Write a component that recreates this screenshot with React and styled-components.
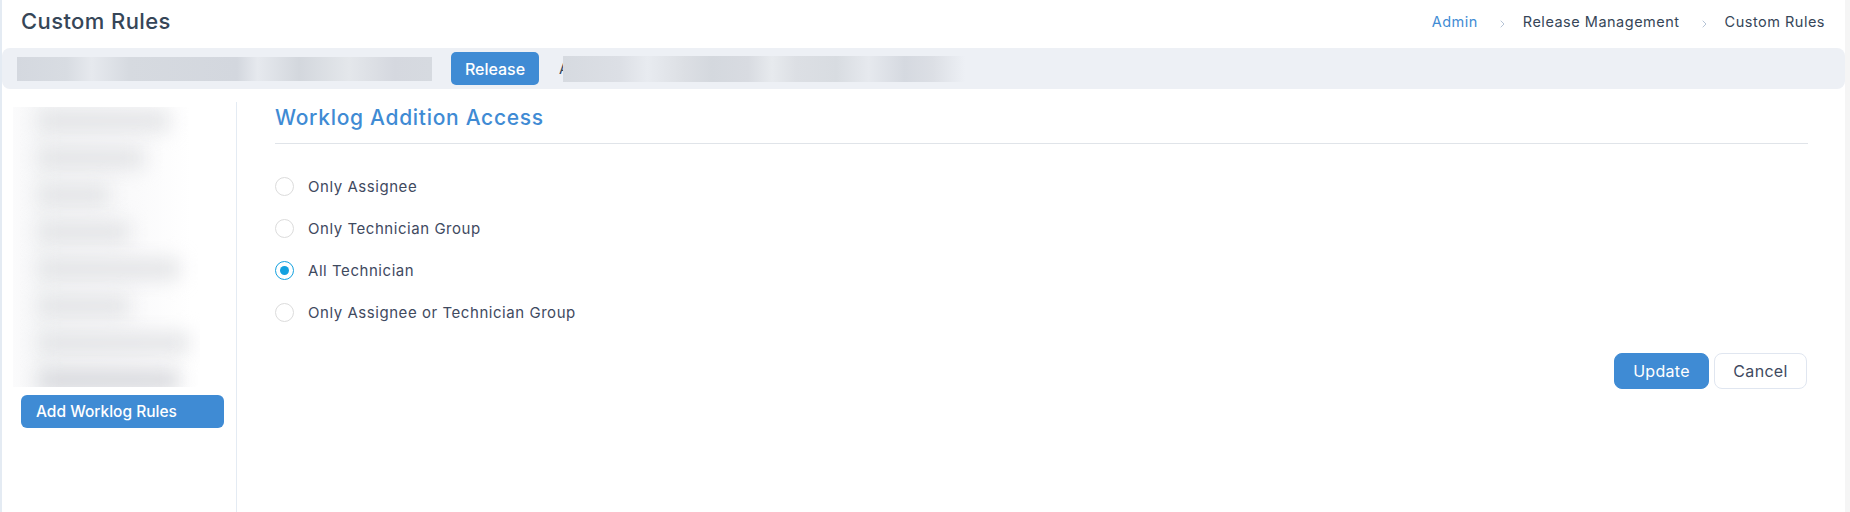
import React from 'react';
import styled, { createGlobalStyle } from 'styled-components';

const GlobalStyle = createGlobalStyle`
  html, body { margin: 0; padding: 0; background: #fff; }
  body { font-family: Inter, "Open Sans", sans-serif; color: #364658; }
`;

const Page = styled.div`
  box-sizing: border-box;
  width: 1850px;
  height: 512px;
  overflow: hidden;
  display: flex;
  flex-direction: column;
  border-left: 2px solid #e4ebf3;
  border-right: 5px solid #f5f5f5;
`;

const TopBar = styled.header`
  box-sizing: border-box;
  height: 48px;
  flex: none;
  display: flex;
  align-items: center;
  justify-content: space-between;
  padding: 0 20px 6px 19px;
`;

const Title = styled.h1`
  margin: 0;
  font-size: 22px;
  font-weight: 500;
  letter-spacing: 0.4px;
  color: #364658;
`;

const Crumbs = styled.nav`
  display: flex;
  align-items: center;
  font-size: 14.5px;
`;

const Crumb = styled.span`
  letter-spacing: 0.5px;
  color: ${({ $active }) => ($active ? '#3f8bd4' : '#364658')};
`;

const Chevron = styled.svg`
  width: 5px;
  height: 8px;
  margin: 5px 18px 0 22px;
  fill: none;
  stroke: #b6c4d6;
  stroke-width: 1;
`;

const FilterBar = styled.div`
  box-sizing: border-box;
  height: 41px;
  flex: none;
  display: flex;
  align-items: center;
  background: #edf0f5;
  border-radius: 8px;
  padding-left: 15px;
`;

const BlurStrip = styled.div`
  width: 415px;
  height: 24px;
  flex: none;
  background: linear-gradient(90deg, #d4d8df 0%, #d8dce2 12%, #e6e9ee 18%, #d6dae0 27%, #d3d7de 53%, #e6e9ee 58%, #d3d7dd 68%, #e4e7eb 80%, #d5d8df 91%, #d6dae0 100%);
`;

const TabButton = styled.button`
  width: 88px;
  height: 33px;
  flex: none;
  margin-left: 19px;
  border: 0;
  border-radius: 5px;
  background: #3f8bd4;
  color: #fff;
  font: 500 16px Inter, sans-serif;
  padding: 0;
`;

const TabLetter = styled.span`
  flex: none;
  width: 4px;
  margin-left: 20px;
  font-size: 14.5px;
  color: #364658;
`;

const BlurStripWide = styled.div`
  position: relative;
  width: 402px;
  height: 26px;
  flex: none;
  background: linear-gradient(90deg, #d6dae0 0%, #dcdfe5 14%, #e8ebf0 21%, #dcdfe4 30%, #d4d8de 37%, #d8dbe1 46%, #e7eaee 52%, #dcdfe4 58%, #d8dce1 68%, #e6e9ee 76%, #d5d9e0 85%, #dcdfe5 92%, #edf0f5 100%);
`;

const Body = styled.div`
  flex: 1;
  min-height: 0;
  display: flex;
  padding-top: 13px;
`;

const Sidebar = styled.aside`
  box-sizing: border-box;
  width: 235px;
  flex: none;
  border-right: 1px solid #e4ebf3;
  padding: 5px 11px 0 11px;
`;

const BlurMenu = styled.div`
  box-sizing: border-box;
  width: 187px;
  height: 280px;
  overflow: hidden;
  display: flex;
  flex-direction: column;
  gap: 19px;
  padding: 5px 0 0 26px;
  background: linear-gradient(90deg, #fbfbfc 0%, #f5f6f7 16%, #fafafb 65%, #ffffff 95%);
`;

const BlurLine = styled.div`
  flex: none;
  height: 18px;
  width: ${({ $width }) => $width}px;
  background: ${({ $dark }) => ($dark ? '#d2d3d8' : '#dfe0e3')};
  filter: blur(10px);
`;

const AddButton = styled.button`
  box-sizing: border-box;
  display: block;
  width: 203px;
  height: 33px;
  margin: 8px 0 0 8px;
  padding: 0 0 0 15px;
  border: 0;
  border-radius: 6px;
  background: #3f8bd4;
  color: #fff;
  font: 500 15.5px Inter, sans-serif;
  text-align: left;
`;

const Main = styled.main`
  flex: 1;
  min-width: 0;
  padding: 0 37px 0 38px;
`;

const Heading = styled.h2`
  margin: 0;
  height: 42px;
  box-sizing: border-box;
  border-bottom: 1px solid #e0e4e9;
  font-size: 21px;
  font-weight: 500;
  letter-spacing: 0.7px;
  line-height: 32px;
  color: #3f8bd4;
`;

const RadioList = styled.div`
  display: flex;
  flex-direction: column;
  gap: 20px;
  padding-top: 31px;
`;

const RadioRow = styled.label`
  display: flex;
  align-items: center;
  gap: 14px;
  height: 22px;
  font-size: 15px;
  letter-spacing: 0.55px;
  color: #3f4a5f;
`;

const RadioCircle = styled.span`
  box-sizing: border-box;
  width: 19px;
  height: 19px;
  flex: none;
  display: flex;
  align-items: center;
  justify-content: center;
  background: #fff;
  border-radius: 50%;
  border: 1px solid ${({ $checked }) => ($checked ? '#13a1e0' : '#dcdcdc')};

  &::after {
    content: '';
    width: 9px;
    height: 9px;
    border-radius: 50%;
    background: ${({ $checked }) => ($checked ? '#13a1e0' : 'transparent')};
  }
`;

const Actions = styled.div`
  display: flex;
  justify-content: flex-end;
  gap: 5px;
  margin: 30px 1px 0 0;
`;

const ActionButton = styled.button`
  box-sizing: border-box;
  height: 36px;
  width: ${({ $primary }) => ($primary ? '95px' : '93px')};
  border-radius: 8px;
  padding: 0;
  border: 1px solid ${({ $primary }) => ($primary ? '#3f8bd4' : '#e0e6f0')};
  background: ${({ $primary }) => ($primary ? '#3f8bd4' : '#fff')};
  color: ${({ $primary }) => ($primary ? '#fff' : '#3f4a5f')};
  font: 400 16px Inter, sans-serif;
  letter-spacing: 0.3px;
`;

const options = [
  { label: 'Only Assignee' },
  { label: 'Only Technician Group' },
  { label: 'All Technician', checked: true },
  { label: 'Only Assignee or Technician Group' },
];

const menuLines = [
  { width: 130 },
  { width: 105 },
  { width: 70 },
  { width: 90 },
  { width: 140 },
  { width: 90 },
  { width: 150 },
  { width: 140, dark: true },
];

const Separator = () => (
  <Chevron viewBox="0 0 5 8">
    <path d="M0.7 0.7 L4 4 L0.7 7.3" />
  </Chevron>
);

export default function App() {
  return (
    <>
      <GlobalStyle />
      <Page>
        <TopBar>
          <Title>Custom Rules</Title>
          <Crumbs>
            <Crumb $active>Admin</Crumb>
            <Separator />
            <Crumb>Release Management</Crumb>
            <Separator />
            <Crumb>Custom Rules</Crumb>
          </Crumbs>
        </TopBar>
        <FilterBar>
          <BlurStrip />
          <TabButton>Release</TabButton>
          <TabLetter>A</TabLetter>
          <BlurStripWide />
        </FilterBar>
        <Body>
          <Sidebar>
            <BlurMenu>
              {menuLines.map((line, i) => (
                <BlurLine key={i} $width={line.width} $dark={line.dark} />
              ))}
            </BlurMenu>
            <AddButton>Add Worklog Rules</AddButton>
          </Sidebar>
          <Main>
            <Heading>Worklog Addition Access</Heading>
            <RadioList>
              {options.map((option) => (
                <RadioRow key={option.label}>
                  <RadioCircle $checked={option.checked} />
                  {option.label}
                </RadioRow>
              ))}
            </RadioList>
            <Actions>
              <ActionButton $primary>Update</ActionButton>
              <ActionButton>Cancel</ActionButton>
            </Actions>
          </Main>
        </Body>
      </Page>
    </>
  );
}
